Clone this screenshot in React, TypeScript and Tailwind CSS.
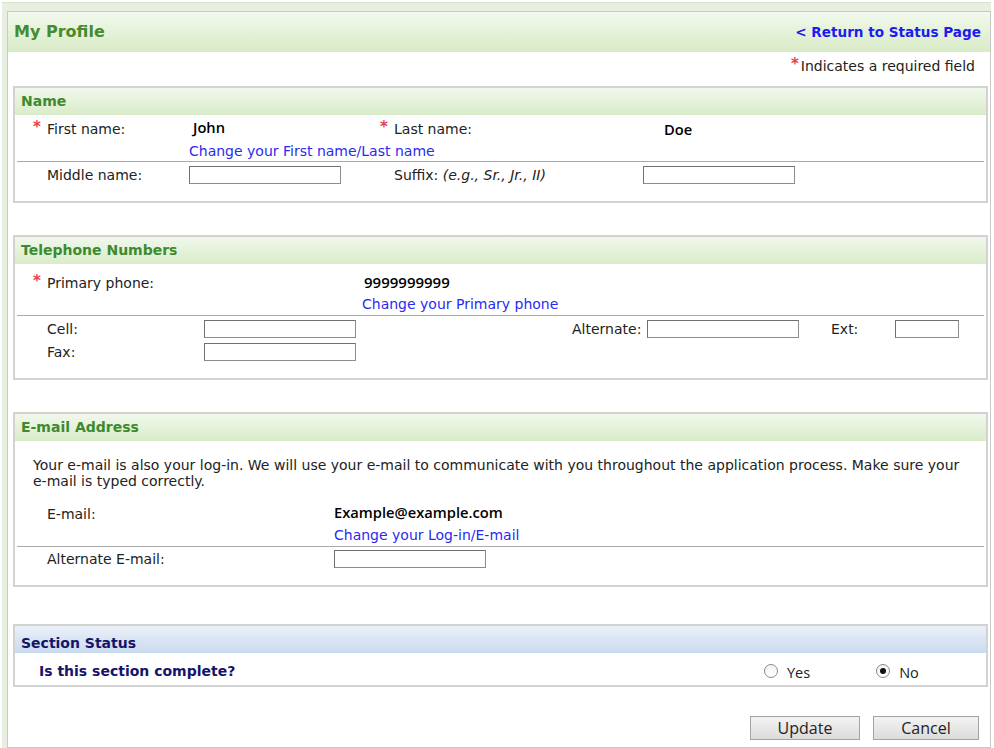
import React from "react";

const font = "font-['DejaVu_Sans','Verdana',sans-serif]";
const dataFont = "font-['Open_Sans','Noto_Sans',sans-serif]";

function Req() {
  return (
    <span className="flex h-full w-[14px] items-start pt-[1px] text-[15px] font-bold leading-none text-[#e4424c]">
      *
    </span>
  );
}

function Field({ w = "w-[152px]" }: { w?: string }) {
  return (
    <input
      className={`h-[18px] ${w} border border-[#8c8c8c] border-t-[#707070] border-l-[#707070] bg-white px-1 text-[13px] outline-none`}
    />
  );
}

function SectionHeader({ title, blue = false }: { title: string; blue?: boolean }) {
  return (
    <div
      className={
        blue
          ? "flex h-[27px] items-center bg-gradient-to-b from-[#ebf1f9] to-[#c9daee] pl-[6px] pt-[7px] text-[14px] font-bold text-[#14146b]"
          : "flex h-[27px] items-center bg-gradient-to-b from-[#f1f8ec] to-[#d9ecc9] pl-[6px] text-[14px] font-bold text-[#3d8a2f]"
      }
    >
      {title}
    </div>
  );
}

function Box({ children, className = "" }: { children: React.ReactNode; className?: string }) {
  return (
    <section className={`ml-[5px] mr-[2px] border-2 border-[#d2d2d2] bg-white ${className}`}>
      {children}
    </section>
  );
}

function Divider() {
  return <div className="mx-[2px] h-px bg-[#a9a9a9]" />;
}

function ChangeLink({ children }: { children: React.ReactNode }) {
  return <a className="cursor-pointer text-[#2a2af2]">{children}</a>;
}

function Radio({ checked, label }: { checked?: boolean; label: string }) {
  return (
    <label className="flex items-center gap-[9px]">
      <span className="flex h-[14px] w-[14px] items-center justify-center rounded-full border border-[#8a8a8a] bg-gradient-to-b from-[#f4f4f4] to-white">
        {checked && <span className="h-[6px] w-[6px] rounded-full bg-[#111]" />}
      </span>
      <span className={`${dataFont} pt-[4px] text-[14.5px] text-[#222]`}>{label}</span>
    </label>
  );
}

export default function App() {
  return (
    <div className={`min-h-screen bg-white pl-[2px] pr-[3px] pt-[2px] ${font} text-[14px] text-[#222]`}>
      <div className="min-h-[746px] border-t border-[#d7e2cc] bg-[#e7efe0] pl-[5px] pt-[8px]">
        <div className="min-h-[737px] border border-[#c9c9c9] bg-white">
          <header className="flex h-[40px] items-center justify-between bg-gradient-to-b from-[#f2f9ee] to-[#d8ebc6] pl-[6px] pr-[9px]">
            <h1 className="text-[16px] font-bold text-[#468b2f]">My Profile</h1>
            <a className="cursor-pointer text-[13.6px] font-bold text-[#1c1cee]">&lt; Return to Status Page</a>
          </header>

          <div className="mt-[4px] flex h-[20px] items-center justify-end pr-[15px]">
            <span className="flex h-full items-start pr-[2px] pt-[1px] text-[15px] font-bold leading-none text-[#e4424c]">*</span>
            <span>Indicates a required field</span>
          </div>

          {/* Name */}
          <Box className="mt-[10px]">
            <SectionHeader title="Name" />
            <div className="pb-[17px] pt-[4px]">
              <div className="flex h-[20px] items-center pl-[18px]">
                <Req />
                <span className="w-[142px]">First name:</span>
                <span className={`${dataFont} w-[191px] pb-[3px] pl-[4px] text-[14.7px] font-semibold text-black`}>John</span>
                <Req />
                <span className="w-[249px]">Last name:</span>
                <span className={`${dataFont} pl-[21px] text-[14.7px] font-semibold text-black`}>Doe</span>
              </div>
              <div className="mb-[1px] mt-[3px] flex h-[18px] items-center pl-[174px]">
                <ChangeLink>Change your First name/Last name</ChangeLink>
              </div>
              <Divider />
              <div className="mt-[4px] flex h-[18px] items-center pl-[32px]">
                <span className="w-[142px]">Middle name:</span>
                <span className="w-[191px]">
                  <Field />
                </span>
                <span className="w-[14px]" />
                <span className="w-[249px]">
                  Suffix: <i>(e.g., Sr., Jr., II)</i>
                </span>
                <Field />
              </div>
            </div>
          </Box>

          {/* Telephone */}
          <Box className="mt-[32px]">
            <SectionHeader title="Telephone Numbers" />
            <div className="pb-[17px] pt-[9px]">
              <div className="flex h-[20px] items-center pl-[18px]">
                <Req />
                <span className="w-[317px]">Primary phone:</span>
                <span className={`${dataFont} pb-[1px] text-[15px] font-semibold text-black`}>9999999999</span>
              </div>
              <div className="mt-[2px] flex h-[18px] items-center pl-[347px]">
                <ChangeLink>Change your Primary phone</ChangeLink>
              </div>
              <div className="mt-[2px]">
                <Divider />
              </div>
              <div className="mt-[4px] flex h-[18px] items-center pl-[32px]">
                <span className="w-[157px]">Cell:</span>
                <Field />
                <span className="w-[216px]" />
                <span className="w-[75px]">Alternate:</span>
                <Field />
                <span className="w-[32px]" />
                <span className="w-[64px]">Ext:</span>
                <Field w="w-[64px]" />
              </div>
              <div className="mt-[5px] flex h-[18px] items-center pl-[32px]">
                <span className="w-[157px]">Fax:</span>
                <Field />
              </div>
            </div>
          </Box>

          {/* E-mail */}
          <Box className="mt-[32px]">
            <SectionHeader title="E-mail Address" />
            <div className="pb-[17px] pt-[16px]">
              <p className="pl-[18px] leading-[16px]">
                Your e-mail is also your log-in. We will use your e-mail to communicate with you throughout the application process. Make sure your
                <br />
                e-mail is typed correctly.
              </p>
              <div className="mt-[15px] flex h-[20px] items-center pl-[32px]">
                <span className="w-[287px]">E-mail:</span>
                <span className={`${dataFont} pb-[4px] text-[14.7px] font-semibold text-black`}>Example@example.com</span>
              </div>
              <div className="mt-[2px] flex h-[18px] items-center pl-[319px]">
                <ChangeLink>Change your Log-in/E-mail</ChangeLink>
              </div>
              <div className="mt-[2px]">
                <Divider />
              </div>
              <div className="mt-[3px] flex h-[18px] items-center pl-[32px]">
                <span className="w-[287px]">Alternate E-mail:</span>
                <Field />
              </div>
            </div>
          </Box>

          {/* Section Status */}
          <Box className="mt-[37px]">
            <SectionHeader title="Section Status" blue />
            <div className="mb-[3px] mt-[7px] flex h-[22px] items-center pl-[24px]">
              <span className="w-[725px] font-bold text-[#14146b]">Is this section complete?</span>
              <Radio label="Yes" />
              <span className="w-[66px]" />
              <Radio checked label="No" />
            </div>
          </Box>

          <div className="mr-[11px] mt-[29px] flex justify-end gap-[13px]">
            <button className={`${dataFont} h-[24px] w-[110px] border border-[#a3a3a3] bg-gradient-to-b from-[#f3f3f3] to-[#dcdcdc] text-[16px] leading-none text-[#222]`}>
              Update
            </button>
            <button className={`${dataFont} h-[24px] w-[106px] border border-[#a3a3a3] bg-gradient-to-b from-[#f3f3f3] to-[#dcdcdc] text-[16px] leading-none text-[#222]`}>
              Cancel
            </button>
          </div>
        </div>
      </div>
    </div>
  );
}
